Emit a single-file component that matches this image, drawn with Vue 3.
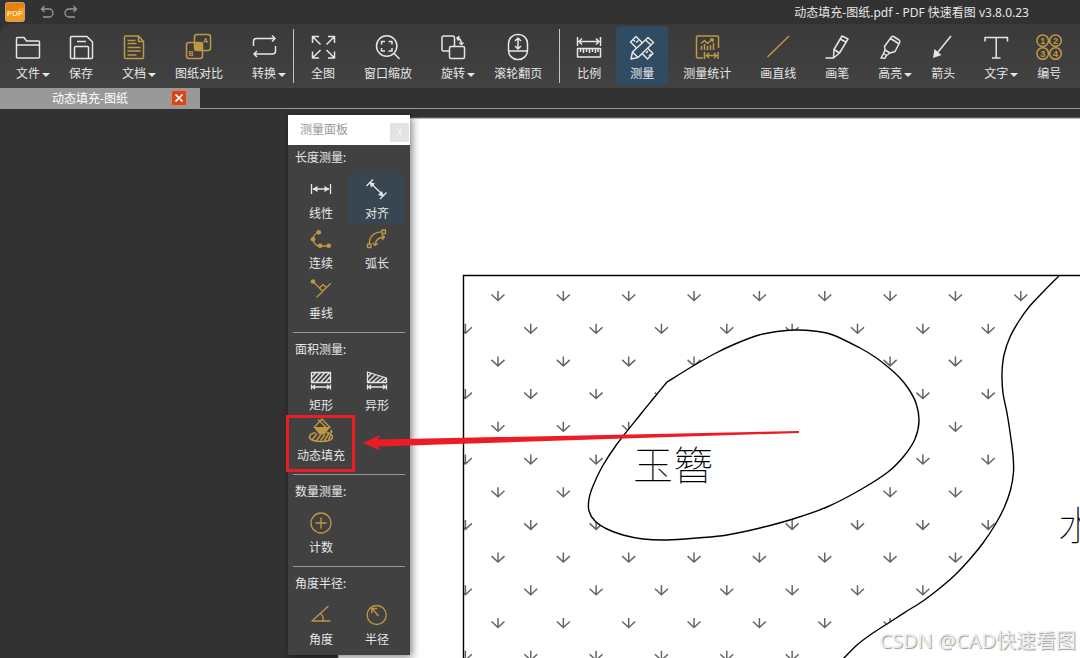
<script setup>
const icons = {
  file: '<path d="M2.500 24V5.500a1 1 0 0 1 1-1h6.500l2.500 3.500h12a1 1 0 0 1 1 1v15a1 1 0 0 1-1 1h-21a1 1 0 0 1-1-1zM2.500 12h23"/>',
  save: '<path d="M3.500 4.500a1 1 0 0 1 1-1H20l5.500 5.500v15.500a1 1 0 0 1-1 1h-20a1 1 0 0 1-1-1zM7.500 25.500v-11a1 1 0 0 1 1-1h12a1 1 0 0 1 1 1v11M10 8.500h9"/>',
  doc: '<path d="M5.500 3h13l5 5.500V24.500a1 1 0 0 1-1 1h-17a1 1 0 0 1-1-1V4a1 1 0 0 1 1-1zM18.500 3v5.500h5M7.500 7.500h8M7.500 10.500h9M7.500 14.500h13M7.500 18h13M7.500 22h9"/>',
  compare: '<path fill="currentColor" stroke="none" d="M12 9.500h5.500V15a2.500 2.500 0 0 1-2.500 2.500H9.500V12A2.500 2.500 0 0 1 12 9.500z"/><rect x="9.500" y="1.500" width="16" height="16" rx="2.500"/><rect x="1.500" y="9.500" width="16" height="16" rx="2.500"/><text x="20.500" y="9.500" class="t7">A</text><text x="6" y="23" class="t7">B</text>',
  convert: '<path d="M3.500 13V8.500a3 3 0 0 1 3-3H25M22 2.500l3 3-3 3M25.500 13v5a3 3 0 0 1-3 3H4M7 18l-3 3 3 3"/>',
  full: '<path d="M3.500 10V3.500H10M3.500 3.500l8 8M19 3.500h6.500V10M25.500 3.500l-8 8M3.500 18.500V25H10M3.500 25l8-8M19 25h6.500v-6.500M25.500 25l-8-8"/>',
  zoom: '<circle cx="12.700" cy="13" r="10.200"/><path d="M20 20.300l5.500 5.700M7.500 11.500V8.500h3.500M14.500 8.500h3.500v3M18 15v3h-3.500M11 18H7.500v-3"/>',
  rotate: '<path d="M10 18H4.500a1.500 1.500 0 0 1-1.500-1.500v-12A1.500 1.500 0 0 1 4.500 3H14a1.500 1.500 0 0 1 1.500 1.500v9"/><rect x="10.500" y="13.500" width="15" height="12" rx="1.500"/><path d="M18 5c3 .5 4.500 2.500 4.500 6M20.500 3.500L18 5l1.500 2.700M20.300 9.500l2.200 2 2-2"/>',
  wheel: '<rect x="4.500" y="1.500" width="19" height="25" rx="9"/><path d="M4.500 18h19M14 5.500v10M11 8l3-3 3 3M11 13l3 3 3-3"/>',
  scale: '<path d="M2.500 4v9M25.500 4v9M4 8.500h20M7 5.500l-3 3 3 3M21 5.500l3 3-3 3M2.500 15.500h23V24h-23zM5.500 16v3M8.500 16v4M11.500 16v3M14.500 16v4M17.500 16v3M20.500 16v4M23 16v3"/>',
  measure: '<path d="M2.500 9L8 3.500l17 17-5.500 5.500zM5 6.500L7 8.500M8 9.500l2.500-2M18 20l2-2M21 23l2-2"/><path fill="#2f4c63" d="M20 4.500l5.500 5L10 24.500l-7 1.500 1.500-7zM4.500 19l5.500 5.500M17.500 7l5.500 5"/>',
  stats: '<path d="M25.500 15V4a1 1 0 0 0-1-1h-20a1 1 0 0 0-1 1v20a1 1 0 0 0 1 1H10M8 10.500l3.500-3 3 3 5.500-4.500M17 6h3v3M8.500 13v4M11.500 11v6M14.500 13v4M17.500 12v5M20.500 10v7M11.500 19v7M25 19v7M13 22.500h10.500M16 20l-2.500 2.500L16 25M21 20l2.500 2.500L21 25"/>',
  line: '<path d="M3.500 24L25 3"/>',
  pen: '<path d="M2.500 25h8l6-5 8.500-14-6-3L11 16.500 10.500 25M11 16.500l5.500 3.500M17 6l6 3"/>',
  marker: '<path d="M8.500 13.500L15 4.500a2 2 0 0 1 2.500-1l5.500 3.500a2 2 0 0 1 .700 2.500L19 18.500l-5 1.500-5-3zM14.500 5.500l8 5M9 17l-1.500 3.500 3 2L14 20M7.500 20.500L5 25l4 .200 1.500-2.700"/>',
  arrow: '<path d="M22 3L9 19"/><path fill="currentColor" stroke="none" d="M4 25l1.500-9L12.500 22z"/>',
  text: '<path d="M3 8.500V4.500h22.500v4M14.200 4.500V25M10 25h8.500"/>',
  number: '<circle cx="7.700" cy="7.700" r="5.800"/><circle cx="20.500" cy="7.700" r="5.800"/><circle cx="7.700" cy="20.500" r="5.800"/><circle cx="20.500" cy="20.500" r="5.800"/><text x="7.700" y="11" class="t9">1</text><text x="20.500" y="11" class="t9">2</text><text x="7.700" y="23.800" class="t9">3</text><text x="20.500" y="23.800" class="t9">4</text>',

  linear: '<path d="M4.500 9v10M23.500 9v10M6 14h16"/><path fill="currentColor" stroke="none" d="M5.500 14l5-3v6zM22.500 14l-5-3v6z"/>',
  align: '<path d="M3.500 11L10 4.500M17 24l6.500-6.500M8 8.500l12 11.500"/><path fill="currentColor" stroke="none" d="M6.500 7l5.500 1.500-4 4zM20.500 21.500l-5.500-1.500 4-4z"/>',
  chain: '<path d="M11.500 7.500C8 8.500 6 11 6 15M6 15c1 3.500 3.500 6 7 6h9"/><g fill="currentColor" stroke="none"><circle cx="11.800" cy="7.300" r="2.300"/><circle cx="6" cy="14.300" r="2.300"/><circle cx="13" cy="20.700" r="2.300"/><circle cx="21.800" cy="20.700" r="2.300"/></g>',
  arc: '<rect x="19" y="5" width="3.500" height="3.500"/><rect x="4.500" y="19" width="3.500" height="3.500"/><path d="M6.200 19C6.500 12 10.500 7 19 6.800M12 20c.5-5 3.500-7.500 9-8M9.800 17.800l2.200 2.700 2.700-2.200M18.500 9.500l3 2.300-2.200 3"/>',
  perp: '<path d="M6 6.500l10 10M9.500 22.500l14-14M12.500 13l3.500-3.500 3 3"/><circle cx="6" cy="6.500" r="2.300" fill="currentColor" stroke="none"/>',
  rect: '<path d="M4.500 5.500h19v10h-19zM5 10l4-4.500M5 15l8.500-9.500M9.500 15l8.500-9.500M14 15l8.500-9.500M18.500 15l5-5.500M4.500 17.500v5M23.500 17.500v5M6 20h16M8 18l-2.500 2L8 22M20 18l2.500 2-2.500 2"/>',
  irregular: '<path d="M4.500 5l19 6v4.500h-19zM5 10l3-3.500M5 15l7.500-7.500M9.500 15L16.500 9M14 15l6.500-5M19 15l4-3.500M4.500 17.500v5M23.500 17.500v5M6 20h16M8 18l-2.500 2L8 22M20 18l2.500 2-2.500 2"/>',
  fill: '<path d="M7 10.500L15 2l8.500 9M11 2.500l8 8"/><path fill="currentColor" d="M6.500 10h17L17.500 17.500h-5zM24 12l1.800 3a1.500 1.500 0 0 1-2.800 0z" stroke="none"/><path d="M8.500 15.500c-3.500.8-6 2.500-6 4.500 0 2.500 4.500 4.500 11.500 4.500s11.500-2 11.500-4.500c0-2-2-3.700-6-4.500M5.500 22.500l4.500-6M9.500 23.500l4.500-6M13.500 23.500l4.500-6M17.500 23.500l4-6.500M21.500 22.500l2-4.500" stroke-width="1.600"/>',
  count: '<circle cx="14" cy="14" r="10"/><path d="M14 8.500v11M8.500 14h11"/>',
  angle: '<path d="M21.500 5L5 20h18.500M13.500 12.500c2 1.500 3 4 2.500 7.500"/>',
  radius: '<circle cx="13.700" cy="14" r="9.500"/><path d="M15.500 15L9.500 8M8.800 12.500V7.500h5.500"/>',
}

const toolGroups = [
  [
    { id: 'file', label: '文件', menu: true },
    { id: 'save', label: '保存' },
    { id: 'doc', label: '文档', menu: true, gold: true },
    { id: 'compare', label: '图纸对比', gold: true },
    { id: 'convert', label: '转换', menu: true },
  ],
  [
    { id: 'full', label: '全图' },
    { id: 'zoom', label: '窗口缩放' },
    { id: 'rotate', label: '旋转', menu: true },
    { id: 'wheel', label: '滚轮翻页' },
  ],
  [
    { id: 'scale', label: '比例' },
    { id: 'measure', label: '测量', active: true },
    { id: 'stats', label: '测量统计', gold: true },
    { id: 'line', label: '画直线', gold: true },
    { id: 'pen', label: '画笔' },
    { id: 'marker', label: '高亮', menu: true },
    { id: 'arrow', label: '箭头' },
    { id: 'text', label: '文字', menu: true },
    { id: 'number', label: '编号', gold: true },
  ],
]

const sections = [
  {
    title: '长度测量:',
    items: [
      { id: 'linear', label: '线性' },
      { id: 'align', label: '对齐', active: true },
      { id: 'chain', label: '连续', gold: true },
      { id: 'arc', label: '弧长', gold: true },
      { id: 'perp', label: '垂线', gold: true },
    ],
  },
  {
    title: '面积测量:',
    items: [
      { id: 'rect', label: '矩形' },
      { id: 'irregular', label: '异形' },
      { id: 'fill', label: '动态填充', gold: true },
    ],
  },
  { title: '数量测量:', items: [{ id: 'count', label: '计数', gold: true }] },
  {
    title: '角度半径:',
    items: [
      { id: 'angle', label: '角度', gold: true },
      { id: 'radius', label: '半径', gold: true },
    ],
  },
]

// Catmull-Rom spline through the survey points, written as cubic segments
function spline(p) {
  let d = `M${p[0][0]} ${p[0][1]}`
  for (let i = 0; i < p.length - 1; i++) {
    const a = p[i - 1] || p[i]
    const b = p[i]
    const c = p[i + 1]
    const e = p[i + 2] || c
    d += `C${b[0] + (c[0] - a[0]) / 6} ${b[1] + (c[1] - a[1]) / 6} ${c[0] - (e[0] - b[0]) / 6} ${c[1] - (e[1] - b[1]) / 6} ${c[0]} ${c[1]}`
  }
  return d
}

const bed = spline([
  [667, 382], [693, 366], [714, 354], [735, 344], [759, 335], [777, 331.500], [795, 330], [814, 331],
  [833, 335], [860, 348], [875, 357], [888, 367], [899, 377], [908, 388], [916, 403], [919, 421],
  [915, 439], [904, 456], [888, 472], [860, 490], [827, 507], [793, 519],
  [760, 528], [727, 535], [697, 538], [667, 540], [643, 539], [623, 535], [607, 529], [595, 521],
  [589, 511], [589, 499], [593, 486], [602, 467], [617, 444], [640, 415], [653, 399], [667, 382],
])
const shore = spline([
  [1059, 276], [1043, 292], [1029, 307], [1019, 321], [1010, 337], [1004, 355], [1002, 374],
  [1003, 393], [1007, 413], [1010, 432], [1013, 455], [1013.500, 472], [1010.500, 490], [1004, 508],
  [995, 525], [983, 543], [970, 559], [955, 575], [940, 588], [923, 601], [907, 611], [890, 622],
  [870, 635], [857, 645], [843, 659],
])
const lawn = shore + 'L843 700H463V276Z'

const grass = []
for (let r = 0; r < 12; r++) {
  for (let c = 0; c < 10; c++) {
    grass.push([(r % 2 ? 465.4 : 498) + c * 65.35, 291 + r * 32.7])
  }
}
</script>

<template>
  <div class="app">
    <header class="titlebar">
      <svg class="logo" viewBox="0 0 20 20">
        <rect x="0.500" y="0.500" width="19" height="19" rx="2" fill="#e98208" stroke="#b9a58c" />
        <path d="M1 11c5-3 6 5 9 1s4-8 9-6v13H1z" fill="#f59a1c" />
        <text x="10" y="14" text-anchor="middle">PDF</text>
      </svg>
      <button class="history" aria-label="撤销">
        <svg viewBox="0 0 14 14"><path d="M4.500 1L1.500 4l3 3M1.500 4H9a3.800 3.800 0 0 1 0 8H3" /></svg>
      </button>
      <button class="history" aria-label="重做">
        <svg viewBox="0 0 14 14"><path d="M9.500 1l3 3-3 3M12.500 4H5a3.800 3.800 0 0 0 0 8h6" /></svg>
      </button>
      <h1>动态填充-图纸.pdf - PDF 快速看图 v3.8.0.23</h1>
    </header>

    <nav class="toolbar">
      <div v-for="(group, g) in toolGroups" :key="g" class="group">
        <button
          v-for="t in group"
          :key="t.id"
          class="tool"
          :class="{ active: t.active, gold: t.gold }"
        >
          <svg class="icon" viewBox="0 0 28 28" v-html="icons[t.id]"></svg>
          <span class="label">{{ t.label }}<i v-if="t.menu" class="caret"></i></span>
        </button>
      </div>
    </nav>

    <div class="tabs">
      <div class="tab">
        <span class="tabname">动态填充-图纸</span>
        <button class="tabclose" aria-label="关闭">
          <svg viewBox="0 0 16 16"><path d="M4 4l8 8M12 4l-8 8" /></svg>
        </button>
      </div>
    </div>

    <main class="workspace">
      <svg class="drawing">
        <defs>
          <clipPath id="lawn"><path :d="lawn" /></clipPath>
        </defs>
        <g transform="translate(0 -109)">
          <rect class="sheet" x="338" y="118" width="4000" height="4000" />
          <g clip-path="url(#lawn)" class="grass">
            <path
              v-for="(p, i) in grass"
              :key="i"
              :d="`M${p[0]} ${p[1]}v9.500m-6.500-6l6.500 6l6.500-6`"
            />
          </g>
          <path class="outline" d="M4000 275.500H463.500V4000" />
          <path class="outline" :d="shore" />
          <path class="outline bed" :d="bed" />
          <text class="cad" x="633" y="480">玉簪</text>
          <text class="cad" x="1058" y="540">水</text>
        </g>
      </svg>

      <span class="watermark">CSDN @CAD快速看图</span>

      <aside class="panel">
        <div class="panelhead">
          <h2>测量面板</h2>
          <button aria-label="关闭面板">x</button>
        </div>
        <section v-for="s in sections" :key="s.title">
          <h3>{{ s.title }}</h3>
          <div class="grid">
            <button
              v-for="i in s.items"
              :key="i.id"
              class="cell"
              :class="{ active: i.active, gold: i.gold }"
            >
              <svg class="icon" viewBox="0 0 28 28" v-html="icons[i.id]"></svg>
              <span>{{ i.label }}</span>
            </button>
          </div>
        </section>
      </aside>

      <svg class="callout">
        <g transform="translate(0 -109)">
          <rect x="287.500" y="416.500" width="66" height="54" />
          <path d="M363 443l17-8-2 4.500 421-8.500v2L378 446.500l2 4z" />
        </g>
      </svg>
    </main>
  </div>
</template>

<style>
html,
body {
  margin: 0;
  background: #323232;
}
</style>

<style scoped>
.app {
  display: flex;
  flex-direction: column;
  height: 100vh;
  overflow: hidden;
  background: #323232;
  color: #e6e6e6;
  font: 12px/18px "Noto Sans", "Noto Sans CJK SC", sans-serif;
}
button {
  margin: 0;
  padding: 0;
  border: 0;
  background: none;
  color: inherit;
  font: inherit;
}
h1,
h2,
h3 {
  margin: 0;
  font: inherit;
}
.titlebar {
  display: flex;
  align-items: center;
  flex: none;
  height: 24px;
  padding: 0 51px 0 5px;
}
.logo {
  width: 20px;
  height: 20px;
  margin-right: 15px;
}
.logo text {
  font: bold 8px "Liberation Sans", sans-serif;
  fill: #ffe6c0;
}
.history {
  display: flex;
  margin-right: 10px;
}
.history svg {
  width: 14px;
  height: 14px;
  fill: none;
  stroke: #999;
  stroke-width: 1.3;
}
.titlebar h1 {
  margin-left: auto;
  padding-top: 2px;
  white-space: nowrap;
}
.toolbar {
  display: flex;
  flex: none;
  height: 64px;
  padding-left: 2px;
  border-top-left-radius: 10px;
  background: linear-gradient(#3a3a3a, #424242);
}
.group {
  display: flex;
  gap: 1px;
  padding-top: 2px;
}
.group + .group {
  position: relative;
  margin-left: 7px;
}
.group + .group::before {
  content: "";
  position: absolute;
  left: -4px;
  top: 5px;
  width: 1px;
  height: 54px;
  background: #c4c4c4;
}
.tool {
  display: flex;
  flex-direction: column;
  align-items: center;
  flex: none;
  height: 59px;
  padding: 7px 14px 0;
  border-radius: 4px;
  white-space: nowrap;
}
.tool .icon {
  margin: 0 -2px;
}
.tool.active {
  background: #2f4c63;
}
.icon {
  flex: none;
  width: 28px;
  height: 28px;
  fill: none;
  stroke: currentColor;
  stroke-width: 1.5;
  stroke-linejoin: round;
}
.gold .icon {
  color: #bf9844;
}
.icon :deep(text) {
  fill: currentColor;
  stroke: none;
  text-anchor: middle;
  font-family: "Liberation Sans", sans-serif;
  font-weight: bold;
}
.icon :deep(.t7) {
  font-size: 7px;
}
.icon :deep(.t9) {
  font-size: 9px;
}
.label {
  position: relative;
  margin-top: 4px;
}
.caret {
  position: absolute;
  left: 100%;
  top: 8px;
  margin-left: 2px;
  border: 4px solid transparent;
  border-top-color: #e6e6e6;
  border-bottom: 0;
}
.tabs {
  flex: none;
  display: flex;
  height: 20px;
  border-bottom: 1px solid #999;
}
.tab {
  display: flex;
  align-items: center;
  width: 200px;
  box-sizing: border-box;
  padding-right: 13px;
  background: #999;
  color: #fff;
}
.tabname {
  flex: 1;
  padding: 2px 0 0 9px;
  text-align: center;
}
.tabclose svg {
  display: block;
  box-sizing: border-box;
  width: 16px;
  height: 16px;
  border: 1px solid #e5805f;
  border-radius: 2px;
  background: #cc4a1c;
  fill: none;
  stroke: #fff;
  stroke-width: 2;
}
.workspace {
  position: relative;
  flex: 1;
  overflow: hidden;
}
.drawing,
.callout {
  position: absolute;
  inset: 0;
  width: 100%;
  height: 100%;
}
.sheet {
  fill: #fff;
  stroke: #7d7d7d;
}
.grass {
  fill: none;
  stroke: #666;
  stroke-width: 1.5;
}
.outline {
  fill: none;
  stroke: #000;
  stroke-width: 1.4;
}
.bed {
  fill: #fff;
}
.cad {
  font: 100 40px "Noto Sans CJK SC", sans-serif;
  fill: #000;
}
.watermark {
  position: absolute;
  right: 4px;
  bottom: 3px;
  font-size: 20px;
  line-height: 28px;
  color: #ececec;
  text-shadow: 1px 1px 1px #999;
  white-space: nowrap;
}
.panel {
  position: absolute;
  left: 288px;
  top: 6px;
  width: 122px;
  padding-bottom: 5px;
  background: #414141;
  box-shadow: 2px 2px 8px rgba(0, 0, 0, 0.5);
}
.panelhead {
  display: flex;
  justify-content: space-between;
  align-items: center;
  height: 30px;
  padding: 0 1px 0 12px;
  background: #fff;
  color: #999;
}
.panelhead button {
  width: 19px;
  height: 19px;
  margin-top: 4px;
  background: #e3e3e3;
  color: #f7f7f7;
  line-height: 16px;
}
section {
  margin: 0 5px;
}
section + section {
  margin-top: 8px;
  padding-top: 4px;
  border-top: 1px solid #999;
}
h3 {
  height: 26px;
  padding-left: 2px;
  line-height: 26px;
}
.grid {
  display: grid;
  grid-template-columns: 1fr 1fr;
  padding-top: 3px;
}
.cell {
  display: flex;
  flex-direction: column;
  align-items: center;
  height: 50px;
  padding-top: 1px;
  border-radius: 4px;
  white-space: nowrap;
}
.cell .icon {
  stroke-width: 1.3;
}
.cell span {
  margin-top: 2px;
}
.cell.active {
  background: #384651;
}
.callout {
  pointer-events: none;
}
.callout rect {
  fill: none;
  stroke: #ed1c24;
  stroke-width: 3;
}
.callout path {
  fill: #ed1c24;
}
</style>
